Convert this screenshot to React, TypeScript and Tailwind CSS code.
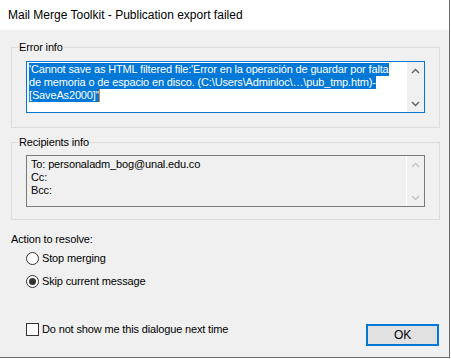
const font = { fontFamily: '"Liberation Sans", Arial, sans-serif' };

const errorLines = [
  "'Cannot save as HTML filtered file:'Error en la operación de guardar por falta",
  "de memoria o de espacio en disco. (C:\\Users\\Adminloc\\…\\pub_tmp.htm)-",
  "[SaveAs2000]\"",
];

const recipientLines = ["To: personaladm_bog@unal.edu.co", "Cc:", "Bcc:"];

const Chevron = ({ up, color }: { up?: boolean; color: string }) => (
  <svg width="9" height="6" viewBox="0 0 9 6">
    <path
      d={up ? "M1 5 L4.5 1.5 L8 5" : "M1 1 L4.5 4.5 L8 1"}
      fill="none"
      stroke={color}
      strokeWidth="1.4"
    />
  </svg>
);

const ScrollBar = ({ color }: { color: string }) => (
  <div className="w-[18px] h-full border-l border-white bg-[#f0f0f0] flex flex-col justify-between">
    <div className="h-[17px] flex items-center justify-center">
      <Chevron up color={color} />
    </div>
    <div className="h-[17px] flex items-center justify-center">
      <Chevron color={color} />
    </div>
  </div>
);

const GroupBox = ({
  label,
  height,
  children,
}: {
  label: string;
  height: string;
  children: React.ReactNode;
}) => (
  <div className={`relative w-[429px] border border-[#dcdcdc] ${height}`}>
    <span className="absolute left-[6px] -top-[8px] px-[1px] bg-[#f0f0f0] leading-[15px]">
      {label}
    </span>
    {children}
  </div>
);

const Radio = ({ label, checked }: { label: string; checked?: boolean }) => (
  <div className="flex items-center h-[13px] pl-[15px] gap-[3px]">
    <div className="w-[13px] h-[13px] rounded-full border border-[#333] bg-white flex items-center justify-center">
      {checked && <div className="w-[7px] h-[7px] rounded-full bg-[#333]" />}
    </div>
    <span className="leading-[15px]">{label}</span>
  </div>
);

export default function App() {
  return (
    <div
      className="w-[451px] h-[359px] bg-white text-[11px] tracking-[-0.15px] text-black"
      style={font}
    >
      <div className="w-[450px] h-[358px] border-r border-b border-[#6b6b6b] bg-[#f0f0f0] flex flex-col">
        {/* Title bar */}
        <div className="h-[30px] bg-white flex items-center pl-[8px] shrink-0 text-[12px] tracking-normal">
          <span>Mail Merge Toolkit - Publication export failed</span>
        </div>

        <div className="pl-[11px] flex flex-col">
          {/* Error info */}
          <div className="mt-[17px]">
            <GroupBox label="Error info" height="h-[81px]">
              <div className="ml-[14px] mt-[13px] w-[399px] h-[52px] border border-[#0078d7] bg-white flex">
                <div className="flex-1 pt-[1px] pl-[2px] whitespace-nowrap overflow-hidden">
                  {errorLines.map((line, i) => (
                    <div key={i} className="flex items-center h-[13px]">
                      <span className="bg-[#0078d7] text-white leading-[13px] h-[13px]">{line}</span>
                      {i === errorLines.length - 1 && (
                        <span className="w-[1px] h-[13px] bg-[#f47b20]" />
                      )}
                    </div>
                  ))}
                </div>
                <ScrollBar color="#606060" />
              </div>
            </GroupBox>
          </div>

          {/* Recipients info */}
          <div className="mt-[14px]">
            <GroupBox label="Recipients info" height="h-[78px]">
              <div className="ml-[14px] mt-[12px] w-[399px] h-[52px] border border-[#7a7a7a] bg-[#f0f0f0] flex">
                <div className="flex-1 pt-[2px] pl-[4px] whitespace-nowrap">
                  {recipientLines.map((line, i) => (
                    <div key={i} className="leading-[13px] h-[13px]">
                      {line}
                    </div>
                  ))}
                </div>
                <ScrollBar color="#c4c4c4" />
              </div>
            </GroupBox>
          </div>

          {/* Action */}
          <div className="mt-[12px] leading-[15px]">Action to resolve:</div>
          <div className="mt-[5px]">
            <Radio label="Stop merging" />
          </div>
          <div className="mt-[10px]">
            <Radio label="Skip current message" checked />
          </div>

          {/* Bottom row */}
          <div className="mt-[35px] w-[428px] flex items-start justify-between">
            <div className="flex items-center h-[13px] pl-[15px] gap-[3px]">
              <div className="w-[13px] h-[13px] border border-[#333] bg-white" />
              <span className="leading-[15px]">Do not show me this dialogue next time</span>
            </div>
            <button className="mt-[1px] w-[73px] h-[22px] border-2 border-[#0078d7] bg-[#e1e1e1] flex items-center justify-center leading-[15px] text-[12px]">
              OK
            </button>
          </div>
        </div>
      </div>
    </div>
  );
}
